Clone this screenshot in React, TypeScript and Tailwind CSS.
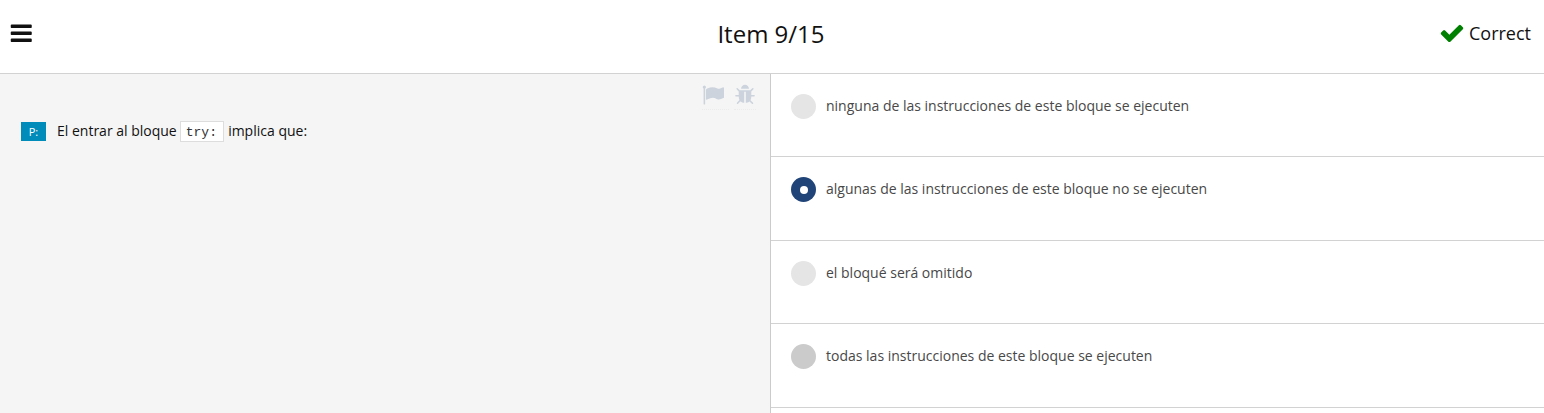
const paths = {
  bars: "M1664 1344v128q0 26-19 45t-45 19h-1408q-26 0-45-19t-19-45v-128q0-26 19-45t45-19h1408q26 0 45 19t19 45zm0-512v128q0 26-19 45t-45 19h-1408q-26 0-45-19t-19-45v-128q0-26 19-45t45-19h1408q26 0 45 19t19 45zm0-512v128q0 26-19 45t-45 19h-1408q-26 0-45-19t-19-45v-128q0-26 19-45t45-19h1408q26 0 45 19t19 45z",
  check: "M1671 566q0 40-28 68l-724 724-136 136q-28 28-68 28t-68-28l-136-136-362-362q-28-28-28-68t28-68l136-136q28-28 68-28t68 28l294 295 656-657q28-28 68-28t68 28l136 136q28 28 28 68z",
  flag: "M320 256q0 72-64 110v1266q0 13-9.5 22.5t-22.5 9.5h-64q-13 0-22.5-9.5t-9.5-22.5v-1266q-64-38-64-110 0-53 37.5-90.5t90.5-37.5 90.5 37.5 37.5 90.5zm1472 64v763q0 25-12.5 38.5t-39.5 27.5q-215 116-369 116-61 0-123.5-22t-108.5-48-115.5-48-142.5-22q-192 0-464 146-17 9-33 9-26 0-45-19t-19-45v-742q0-32 31-55 21-14 79-43 236-120 421-120 107 0 200 29t219 88q38 19 88 19 54 0 117.5-21t110-47 88-47 54.5-21q26 0 45 19t19 45z",
  bug: "M1696 960q0 26-19 45t-45 19h-224q0 171-67 290l208 209q19 19 19 45t-19 45q-18 19-45 19t-45-19l-198-197q-5 5-15 13t-42 28.5-65 36.5-82 29-97 13v-896h-128v896q-51 0-101.5-13.5t-87-33-66-39-43.5-32.5l-15-14-183 207q-20 21-48 21-24 0-43-16-19-18-20.5-44.5t15.5-46.5l202-227q-58-114-58-274h-224q-26 0-45-19t-19-45 19-45 45-19h224v-294l-173-173q-19-19-19-45t19-45 45-19 45 19l173 173h844l173-173q19-19 45-19t45 19 19 45-19 45l-173 173v294h224q26 0 45 19t19 45zm-480-576h-640q0-133 93.5-226.5t226.5-93.5 226.5 93.5 93.5 226.5z",
};

function Icon({ name, className }: { name: keyof typeof paths; className: string }) {
  return (
    <svg viewBox="0 0 1792 1792" fill="currentColor" className={className} aria-hidden="true">
      <path d={paths[name]} />
    </svg>
  );
}

const options = [
  { text: "ninguna de las instrucciones de este bloque se ejecuten", dot: "bg-[#e5e5e5]", row: "h-[83px]", selected: false },
  { text: "algunas de las instrucciones de este bloque no se ejecuten", dot: "bg-[#204478]", row: "h-[84px]", selected: true },
  { text: "el bloqué será omitido", dot: "bg-[#e5e5e5]", row: "h-[83px]", selected: false },
  { text: "todas las instrucciones de este bloque se ejecuten", dot: "bg-[#cbcbcb]", row: "h-[84px]", selected: false },
];

export default function App() {
  return (
    <div className="flex h-[413px] flex-col overflow-hidden bg-white font-['Open_Sans',sans-serif] text-[#111]">
      <header className="grid h-[74px] shrink-0 grid-cols-3 border-b border-[#d2d2d2]">
        <div className="pt-[21px] pl-[9px]">
          <Icon name="bars" className="size-[24.5px]" />
        </div>
        <h1 className="pt-[17px] pr-[2px] text-center text-2xl leading-[33px]">Item 9/15</h1>
        <div className="flex justify-end gap-1 pt-[21px] pr-[13px]">
          <Icon name="check" className="-mt-px size-[26px] text-[#008000]" />
          <span className="text-lg leading-[25px]">Correct</span>
        </div>
      </header>
      <main className="flex flex-1">
        <section className="flex w-[771px] flex-col border-r border-[#cbcbcb] bg-[#f5f5f5]">
          <div className="flex h-[46px] items-start justify-end gap-[5px] pt-[10px] pr-[14px] text-[#ccd3dd]">
            <span className="h-[26px] w-[27px] border-b border-dotted border-[#ececec]">
              <Icon name="flag" className="size-[22px]" />
            </span>
            <span className="h-[26px] border-b border-dotted border-[#ececec]">
              <Icon name="bug" className="size-[22px]" />
            </span>
          </div>
          <div className="flex h-[23px] items-start pl-[21px] text-sm leading-[21px]">
            <span className="mt-[2px] mr-[11px] flex h-[19px] w-[25px] items-center justify-center bg-[#008cba] text-[11px] leading-none text-white">P:</span>
            <span>El entrar al bloque</span>
            <code className="mt-px mr-1 ml-[3px] h-[21px] w-11 border border-[#ddd] bg-white pl-[5px] font-['Courier_New','Liberation_Mono',monospace] text-[13px] leading-[21px] text-[#333]">try:</code>
            <span className="pl-[0.4px]">implica que:</span>
          </div>
        </section>
        <section className="flex-1">
          {options.map((o) => (
            <div key={o.text} className={`flex border-b border-[#d2d2d2] pt-5 pl-5 ${o.row}`}>
              <span className={`flex size-[25px] items-center justify-center rounded-full ${o.dot}`}>
                {o.selected && <span className="size-2 rounded-full bg-white" />}
              </span>
              <span className="ml-[10px] text-sm leading-6 text-[#484848]">{o.text}</span>
            </div>
          ))}
        </section>
      </main>
    </div>
  );
}
